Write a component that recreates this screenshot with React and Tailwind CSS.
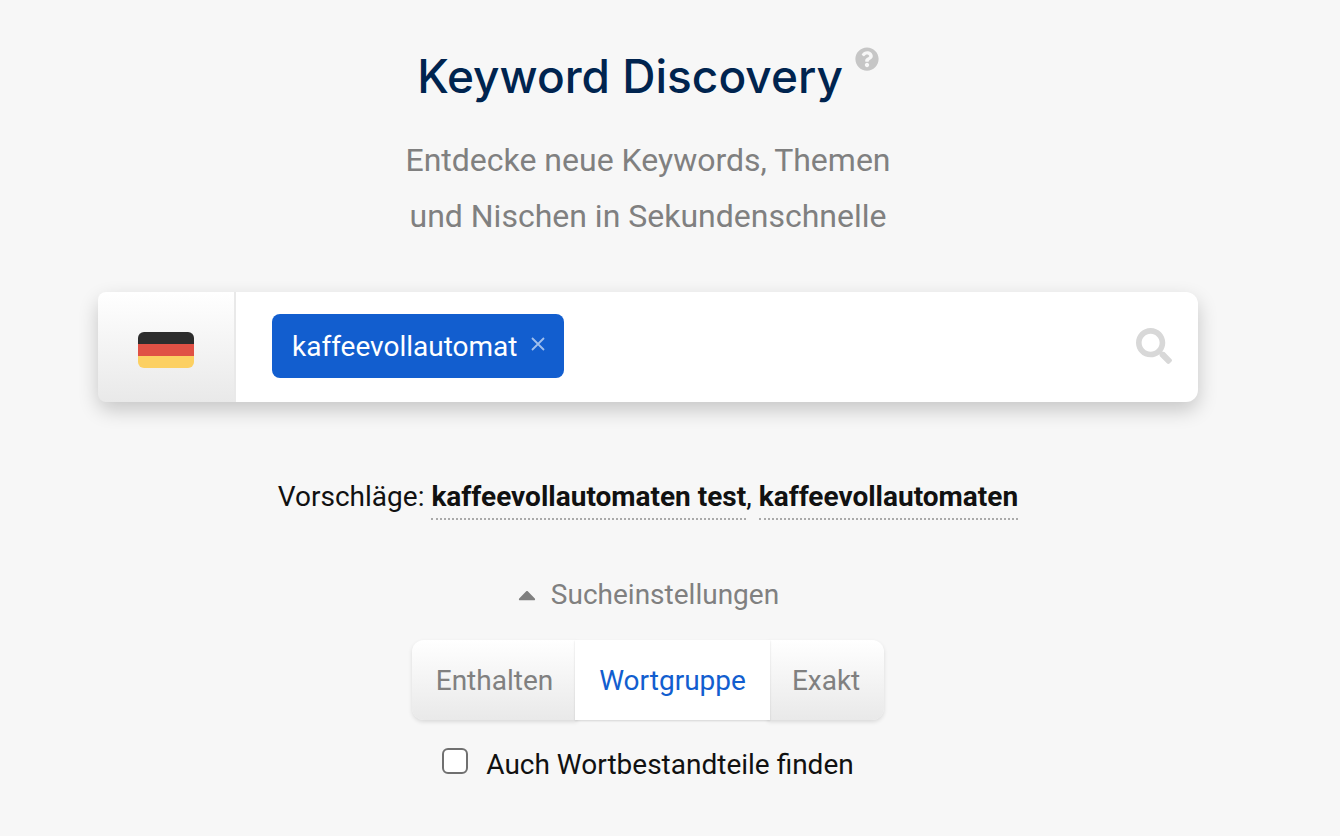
import React, { useState } from 'react';
import { FaCaretUp, FaQuestionCircle, FaSearch } from 'react-icons/fa';

const matchTypes = ['Enthalten', 'Wortgruppe', 'Exakt'];
const suggestions = ['kaffeevollautomaten test', 'kaffeevollautomaten'];

const GermanFlag = () => (
  <svg viewBox="0 0 56 36" className="h-9 w-14 rounded-md" aria-hidden="true">
    <rect width="56" height="12" fill="#2d2d2d" />
    <rect y="12" width="56" height="12" fill="#e05145" />
    <rect y="24" width="56" height="12" fill="#fcd062" />
  </svg>
);

const SearchBar = ({ keywords, onAdd, onRemove }) => {
  const [query, setQuery] = useState('');

  const handleSubmit = (e) => {
    e.preventDefault();
    if (query.trim()) {
      onAdd(query.trim());
      setQuery('');
    }
  };

  return (
    <form
      onSubmit={handleSubmit}
      className="mt-12 flex w-full max-w-[1100px] rounded-xl bg-white shadow-[0_8px_20px_rgba(0,0,0,0.2)]"
    >
      <button
        type="button"
        aria-label="Land: Deutschland"
        className="flex w-[138px] shrink-0 items-center justify-center rounded-l-lg border-r-2 border-[#e9e9e9] bg-linear-to-b from-white to-[#e9e9e9] pt-1.5"
      >
        <GermanFlag />
      </button>
      <div className="flex h-[110px] min-w-0 flex-1 items-center pb-0.5 pl-9 pr-6">
        {keywords.map((keyword) => (
          <span
            key={keyword}
            className="mr-4 flex h-16 items-center rounded-lg bg-[#125ecf] pl-5 pr-[18px] pt-0.5 text-[28px] text-white"
          >
            {keyword}
            <button
              type="button"
              aria-label={`${keyword} entfernen`}
              onClick={() => onRemove(keyword)}
              className="ml-3 px-px pb-1.5 text-[#a0bfec]"
            >
              <svg viewBox="0 0 14 14" className="size-3.5" fill="none" stroke="currentColor" strokeWidth="1.8">
                <path d="M1 1 13 13M13 1 1 13" />
              </svg>
            </button>
          </span>
        ))}
        <input
          type="text"
          aria-label="Keyword"
          value={query}
          onChange={(e) => setQuery(e.target.value)}
          className="min-w-0 flex-1 text-[28px] outline-none"
        />
        <button type="submit" aria-label="Suchen" className="p-0.5 text-[#d8d8d8]">
          <FaSearch className="size-9" />
        </button>
      </div>
    </form>
  );
};

const App = () => {
  const [keywords, setKeywords] = useState(['kaffeevollautomat']);
  const [matchType, setMatchType] = useState('Wortgruppe');
  const [settingsOpen, setSettingsOpen] = useState(true);
  const [findParts, setFindParts] = useState(false);

  const addKeyword = (keyword) => {
    if (!keywords.includes(keyword)) {
      setKeywords([...keywords, keyword]);
    }
  };

  const removeKeyword = (keyword) => {
    setKeywords(keywords.filter((item) => item !== keyword));
  };

  return (
    <main className="flex min-h-screen flex-col items-center bg-[#f7f7f7] pb-12 pl-4 pr-15 pt-11 font-['Roboto',sans-serif] text-[28px] leading-10 text-[#111]">
      <div className="flex items-start gap-3">
        <h1 className="font-['Inter',sans-serif] text-[46px] font-medium leading-16 text-[#00244f]">
          Keyword Discovery
        </h1>
        <button type="button" aria-label="Hilfe" className="pt-[3px] text-[#c6c6c6]">
          <FaQuestionCircle className="size-6" />
        </button>
      </div>

      <p className="mt-6 text-center text-[32px] leading-14 text-[#808080]">
        Entdecke neue Keywords, Themen
        <br />
        und Nischen in Sekundenschnelle
      </p>

      <SearchBar keywords={keywords} onAdd={addKeyword} onRemove={removeKeyword} />

      <p className="mt-[75px]">
        Vorschläge:{' '}
        {suggestions.map((suggestion, i) => (
          <React.Fragment key={suggestion}>
            {i > 0 && ', '}
            <a
              href="#"
              onClick={() => addKeyword(suggestion)}
              className="border-b-2 border-dotted border-[#aaa] pb-[5px] font-bold"
            >
              {suggestion}
            </a>
          </React.Fragment>
        ))}
      </p>

      <button
        type="button"
        aria-expanded={settingsOpen}
        onClick={() => setSettingsOpen(!settingsOpen)}
        className="mt-[58px] flex items-center gap-2.5 pr-1 text-[#808080]"
      >
        <FaCaretUp className="size-7" />
        Sucheinstellungen
      </button>

      {settingsOpen && (
        <>
          <div className="mt-[25px] flex rounded-xl">
            {matchTypes.map((type) => (
              <button
                key={type}
                type="button"
                aria-pressed={matchType === type}
                onClick={() => setMatchType(type)}
                className={`h-20 px-6 pt-0.5 not-first:-ml-0.5 first:rounded-l-xl last:rounded-r-xl ${
                  matchType === type
                    ? 'relative bg-white text-[#125ecf] shadow-[0_1px_2px_rgba(0,0,0,0.14)]'
                    : 'bg-linear-to-b from-white to-[#e9e9e9] text-[#808080] shadow-[0_2px_4px_rgba(0,0,0,0.12)]'
                }`}
              >
                {type}
              </button>
            ))}
          </div>

          <label className="mt-[25px] flex items-start gap-[18px]">
            <input
              type="checkbox"
              checked={findParts}
              onChange={(e) => setFindParts(e.target.checked)}
              className="mt-[3px] size-[26px] appearance-none rounded-md border-2 border-[#707070] bg-white checked:bg-[#125ecf]"
            />
            Auch Wortbestandteile finden
          </label>
        </>
      )}
    </main>
  );
};

export default App;
